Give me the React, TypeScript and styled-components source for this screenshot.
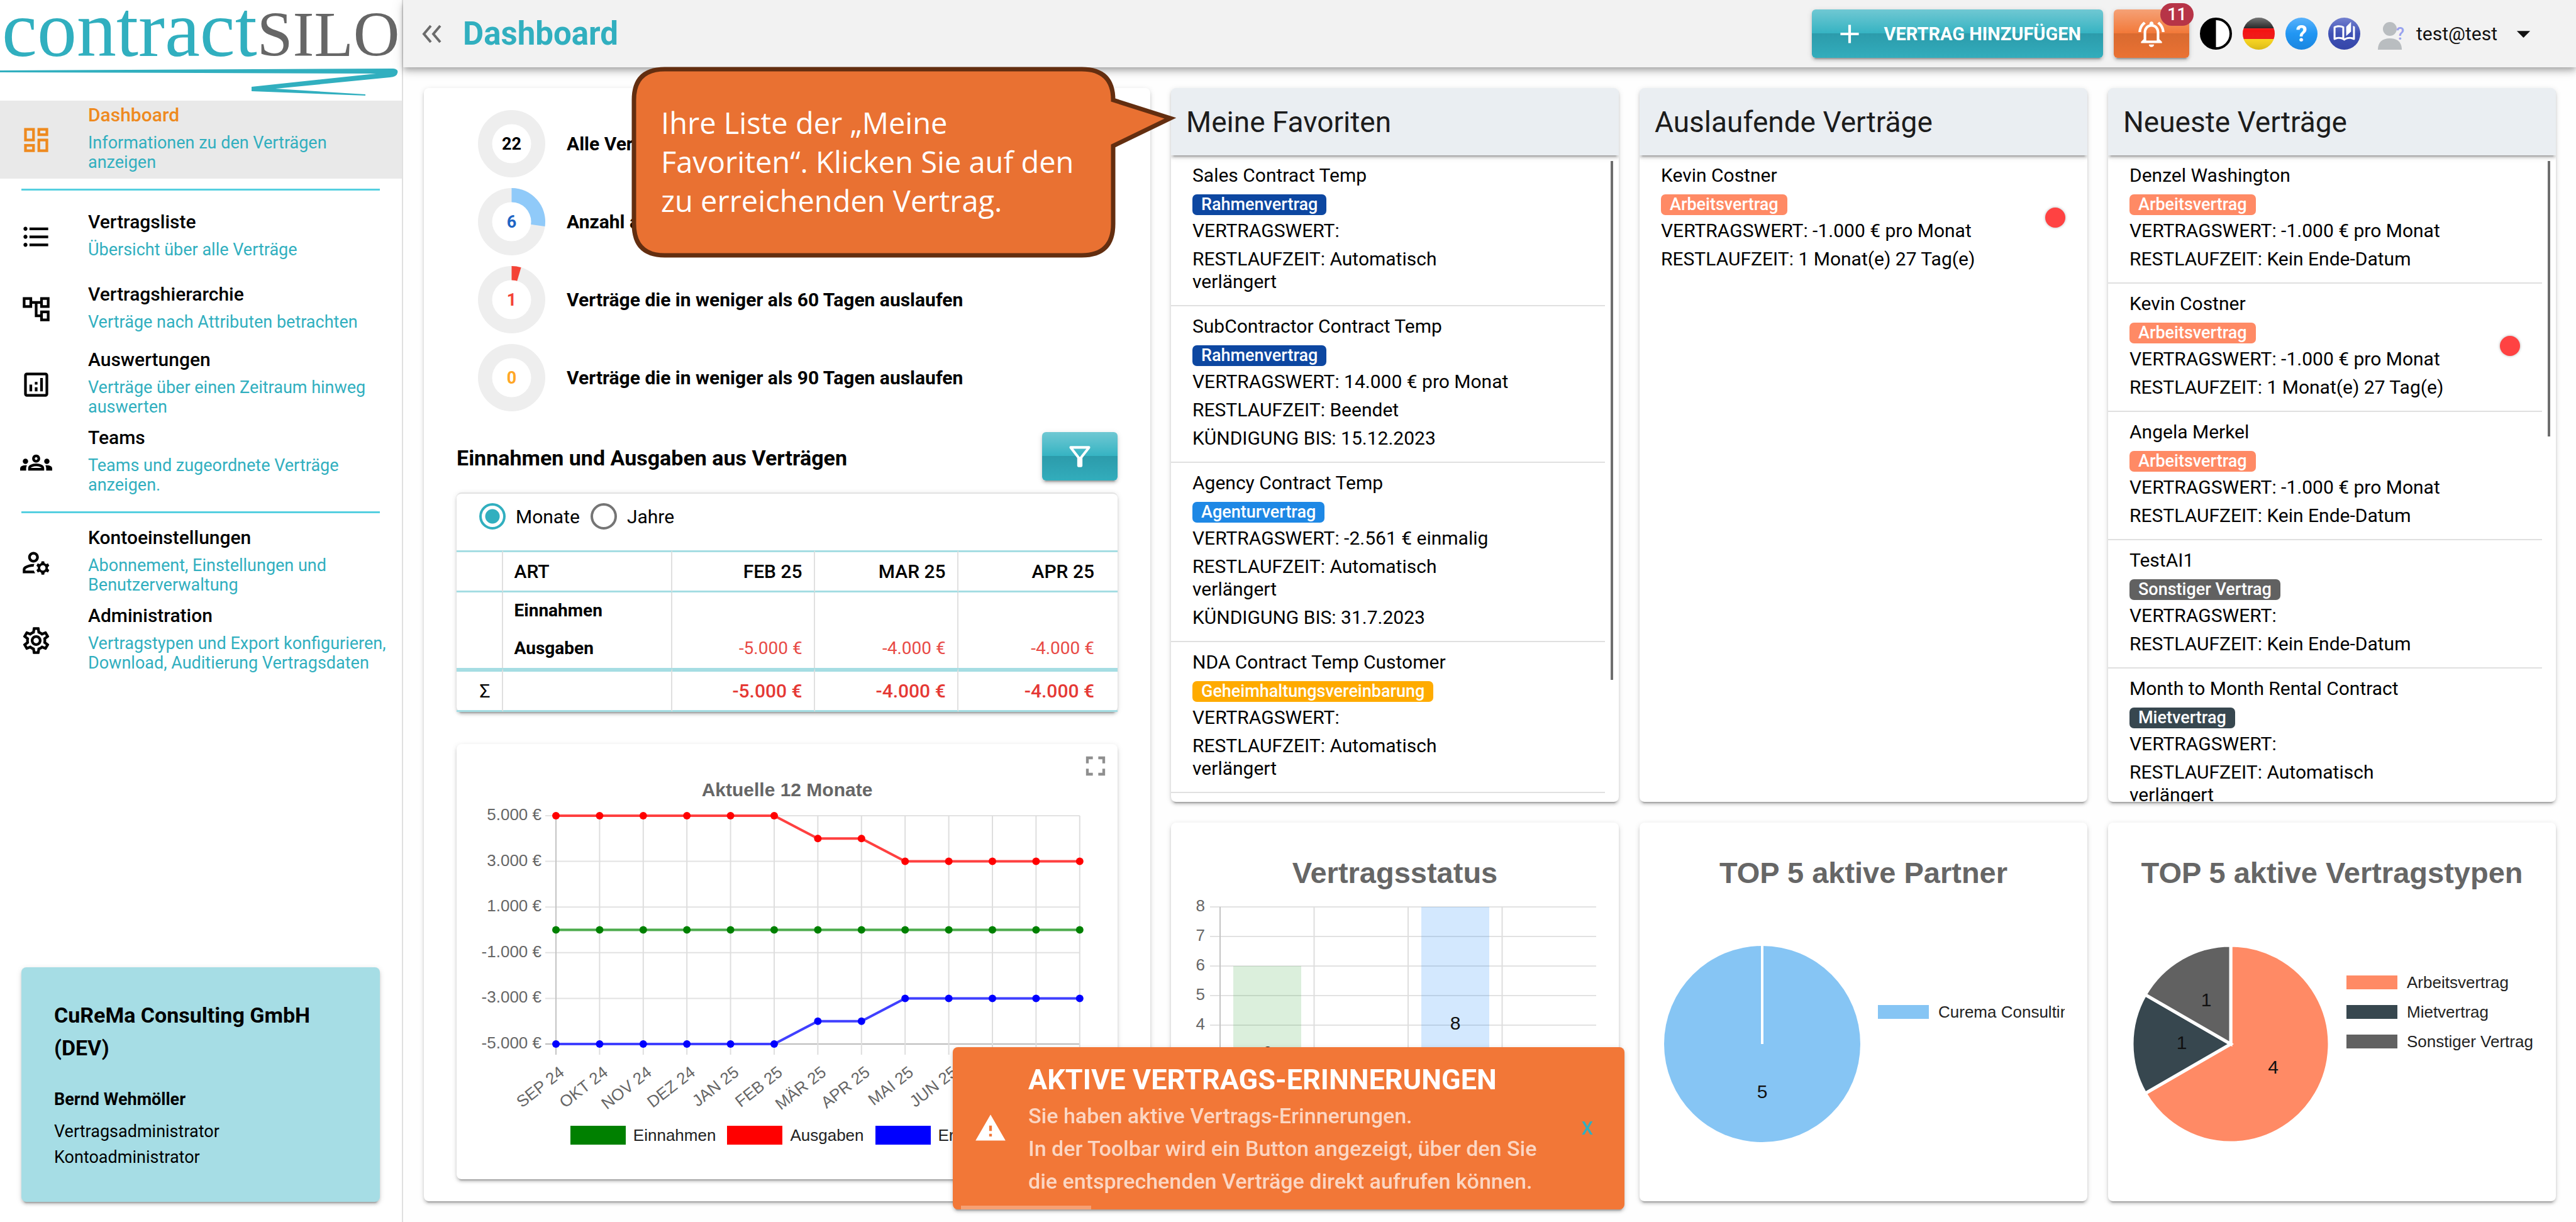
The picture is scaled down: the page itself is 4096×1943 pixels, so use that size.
import React, { useState } from "react";
import styled, { createGlobalStyle, css } from "styled-components";
import {
  MdAdd,
  MdArrowDropDown,
  MdFormatListBulleted,
  MdFullscreen,
  MdOutlineAccountTree,
  MdOutlineAnalytics,
  MdOutlineAutoStories,
  MdOutlineDashboard,
  MdOutlineFilterAlt,
  MdOutlineGroups,
  MdOutlineManageAccounts,
  MdOutlineNotificationsActive,
  MdOutlineSettings,
  MdWarning,
} from "react-icons/md";

const teal = "#31afbf";
const paleTeal = "#a5dde3";
const chartFont = `"Liberation Sans", Arial, sans-serif`;

const GlobalStyle = createGlobalStyle`
  *, *::before, *::after { box-sizing: border-box; }
  body {
    margin: 0;
    background: #fefefe;
    color: #000;
    font-family: Roboto, "Liberation Sans", sans-serif;
    font-size: 30px;
  }
  h1, h2, h3, p, ul { margin: 0; padding: 0; }
  ul { list-style: none; }
  a { color: inherit; text-decoration: none; }
  button { font-family: inherit; border: 0; background: none; padding: 0; cursor: pointer; }
`;

const raised = css`
  box-shadow: 0 6px 2px -4px rgba(0, 0, 0, 0.2), 0 4px 4px rgba(0, 0, 0, 0.14), 0 2px 10px rgba(0, 0, 0, 0.12);
`;

/* ---------- shell ---------- */

const Shell = styled.div`
  display: grid;
  grid-template-columns: 641px minmax(0, 1fr);
  grid-template-rows: minmax(0, 1fr);
  height: 100vh;
`;

const Sidebar = styled.aside`
  display: flex;
  flex-direction: column;
  background: #fff;
  border-right: 2px solid #e0e0e0;
  padding-bottom: 32px;
`;

const Logo = styled.a`
  display: block;
  height: 160px;
  svg { display: block; }
`;

const NavLink = styled.a<{ $active?: boolean; $short?: boolean }>`
  display: flex;
  align-items: center;
  min-height: ${(p) => (p.$short ? 115 : 124)}px;
  padding: 0 8px 0 32px;
  background: ${(p) => (p.$active ? "#e9e9e9" : "transparent")};
  color: ${(p) => (p.$active ? "#ee8a1f" : "#000")};
  svg { flex: none; width: 51px; height: 51px; margin-right: 57px; }
`;

const NavText = styled.span`
  display: flex;
  flex-direction: column;
  gap: 12px;
  padding-bottom: 4px;
`;

const NavTitle = styled.span`
  font-size: 30px;
  line-height: 34px;
  font-weight: 500;
`;

const NavHint = styled.span`
  font-size: 27px;
  line-height: 31px;
  color: ${teal};
`;

const NavRule = styled.hr`
  width: auto;
  height: 3px;
  margin: 16px 35px 16px 34px;
  border: 0;
  background: #55cfe0;
`;

const AccountCard = styled.section`
  ${raised}
  margin: auto 35px 0 34px;
  padding: 50px 52px 50px;
  border-radius: 8px;
  background: #a6dde5;
`;

const Company = styled.h2`
  font-size: 34px;
  line-height: 52px;
  font-weight: 700;
`;

const AccountName = styled.p`
  margin: 35px 0 10px;
  font-size: 27px;
  line-height: 42px;
  font-weight: 700;
`;

const AccountRole = styled.p`
  font-size: 27px;
  line-height: 41px;
`;

/* ---------- top bar ---------- */

const Page = styled.div`
  display: flex;
  flex-direction: column;
  min-width: 0;
`;

const TopBar = styled.header`
  display: flex;
  align-items: center;
  flex: none;
  height: 107px;
  padding: 0 68px 0 29px;
  background: #f2f2f2;
  box-shadow: 0 4px 8px -2px rgba(0, 0, 0, 0.2), 0 8px 10px rgba(0, 0, 0, 0.14), 0 2px 20px rgba(0, 0, 0, 0.12);
`;

const PageTitle = styled.h1`
  margin-left: 34px;
  font-size: 51px;
  line-height: 56px;
  font-weight: 700;
  color: ${teal};
`;

const Tools = styled.div`
  display: flex;
  align-items: center;
  gap: 17px;
  margin-left: auto;
`;

const GlossButton = styled.button<{ $tone: "teal" | "orange" }>`
  ${raised}
  position: relative;
  display: flex;
  align-items: center;
  justify-content: center;
  flex: none;
  gap: 30px;
  min-width: 120px;
  height: 77px;
  padding: 0 35px;
  border-radius: 6px;
  color: #fff;
  font-size: 29px;
  font-weight: 700;
  white-space: nowrap;
  background: ${(p) =>
    p.$tone === "teal"
      ? "linear-gradient(#70c8d3, #35b3c2 50%, #2c9bab 50%, #32adbc)"
      : "linear-gradient(#f5a176, #f27838 50%, #d96a30 50%, #ea7233)"};
  svg { width: 50px; height: 50px; }
`;

const Count = styled.span`
  position: absolute;
  top: -10px;
  right: -7px;
  width: 53px;
  height: 36px;
  border-radius: 18px;
  background: #b73447;
  font-size: 27px;
  line-height: 36px;
  font-weight: 500;
  text-align: center;
`;

const IconButton = styled.button`
  display: block;
  svg { display: block; }
`;

const UserButton = styled.button`
  display: flex;
  align-items: center;
  margin-left: 9px;
  font-size: 30px;
  color: #111;
  > svg:first-child { margin-right: 15px; }
  > svg:last-child { width: 51px; height: 51px; margin-left: 16px; margin-right: -10px; }
`;

/* ---------- cards ---------- */

const Board = styled.main`
  display: grid;
  flex: 1;
  min-height: 0;
  grid-template-columns: minmax(0, 1155fr) repeat(3, minmax(0, 712fr));
  grid-template-rows: minmax(0, 1135fr) minmax(0, 602fr);
  gap: 33px;
  padding: 33px 32px 33px 33px;
`;

const Card = styled.section`
  ${raised}
  display: flex;
  flex-direction: column;
  min-width: 0;
  border-radius: 8px;
  background: #fff;
  overflow: hidden;
`;

const Overview = styled(Card)`
  grid-row: span 2;
  padding: 35px 52px;
`;

const Stats = styled.ul`
  display: flex;
  flex-direction: column;
  gap: 17px;
  padding-left: 34px;
`;

const Stat = styled.li`
  display: flex;
  align-items: center;
  gap: 34px;
  font-size: 30px;
  font-weight: 700;
  white-space: nowrap;
  svg { display: block; }
`;

const SectionHead = styled.div`
  display: flex;
  align-items: center;
  justify-content: space-between;
  margin: 33px 0 19px;
  h2 { padding-top: 4px; font-size: 34px; line-height: 40px; font-weight: 700; }
`;

const Panel = styled.div`
  ${raised}
  border-radius: 8px;
  border-top: 2px solid #e2e2e2;
  background: #fff;
`;

const PeriodRow = styled.div`
  display: flex;
  align-items: center;
  gap: 17px;
  height: 90px;
  padding: 0 0 18px 36px;
`;

const RadioLabel = styled.label`
  display: flex;
  align-items: center;
  gap: 16px;
  font-size: 30px;
`;

const Radio = styled.input`
  appearance: none;
  width: 42px;
  height: 42px;
  margin: 0;
  border: 4px solid #757575;
  border-radius: 50%;
  &:checked {
    border-color: ${teal};
    background: radial-gradient(circle, ${teal} 11px, transparent 12px);
  }
`;

const Money = styled.table`
  width: 100%;
  border-collapse: separate;
  border-spacing: 0;
  table-layout: fixed;
  th, td {
    height: 60px;
    padding: 0 18px;
    border-right: 2px solid #e0e0e0;
    text-align: right;
    font-size: 28px;
    font-weight: 400;
  }
  th:last-child, td:last-child { border-right: 0; padding-right: 37px; }
  thead th {
    height: 67px;
    border-top: 3px solid ${paleTeal};
    border-bottom: 3px solid ${paleTeal};
    font-size: 30px;
    font-weight: 500;
  }
  th:nth-child(2) { text-align: left; }
  tbody th, tbody td { padding-bottom: 4px; }
  tbody th { font-weight: 700; }
  tbody td { color: #e84a46; }
  tfoot td, tfoot th {
    height: 70px;
    border-top: 6px solid ${paleTeal};
    border-bottom: 3px solid ${paleTeal};
    font-size: 30px;
  }
  tfoot td { font-weight: 500; color: #e53935; }
`;

const ChartPanel = styled.div`
  ${raised}
  position: relative;
  display: flex;
  flex-direction: column;
  flex: 1;
  margin-top: 51px;
  padding-top: 55px;
  border-radius: 8px;
  background: #fff;
  > svg { display: block; width: 100%; height: auto; }
`;

const ChartTitle = styled.h3`
  font-family: ${chartFont};
  font-size: 30px;
  line-height: 36px;
  color: #666;
  text-align: center;
`;

const ExpandButton = styled.button`
  position: absolute;
  top: 9px;
  right: 9px;
  color: #8f8f8f;
  svg { display: block; width: 52px; height: 52px; }
`;

const Legend = styled.ul<{ $column?: boolean }>`
  display: flex;
  flex-direction: ${(p) => (p.$column ? "column" : "row")};
  justify-content: center;
  gap: ${(p) => (p.$column ? 17 : 18)}px;
  font-family: ${chartFont};
  font-size: 26px;
  line-height: 30px;
  color: #222;
  white-space: nowrap;
`;

const LegendItem = styled.li<{ $color: string; $flat?: boolean }>`
  display: flex;
  align-items: center;
  gap: ${(p) => (p.$flat ? 15 : 12)}px;
  &::before {
    content: "";
    flex: none;
    width: ${(p) => (p.$flat ? 81 : 88)}px;
    height: ${(p) => (p.$flat ? 22 : 30)}px;
    background: ${(p) => p.$color};
  }
`;

const LineLegend = styled(Legend)`
  padding: 16px 2px 0 0;
`;

const AxisText = styled.text`
  font-family: ${chartFont};
  font-size: 26px;
  fill: #666;
`;

const ValueText = styled.text`
  font-family: ${chartFont};
  font-size: 30px;
  fill: #111;
  text-anchor: middle;
`;

/* ---------- contract lists ---------- */

const ListHead = styled.h2`
  ${raised}
  z-index: 1;
  flex: none;
  height: 107px;
  padding: 0 24px;
  background: #eaeef2;
  font-size: 46px;
  line-height: 108px;
  font-weight: 400;
  color: #1c1c1c;
`;

const ListBody = styled.div`
  display: flex;
  flex: 1;
  min-height: 0;
`;

const Items = styled.ul`
  flex: 1;
  min-width: 0;
  overflow: hidden;
`;

const Item = styled.li`
  display: flex;
  align-items: center;
  padding: 14px 0 19px 34px;
  border-bottom: 2px solid #e0e0e0;
  &:only-child { border-bottom: 0; }
`;

const ItemText = styled.div`
  display: flex;
  flex-direction: column;
  align-items: flex-start;
  flex: 1;
  gap: 9px;
  font-size: 30px;
  line-height: 36px;
`;

const Tag = styled.span<{ $color: string }>`
  margin: 3px 0 -2px;
  padding: 0 14px;
  border-radius: 7px;
  background: ${(p) => p.$color};
  color: #fff;
  font-size: 27px;
  line-height: 33px;
  font-weight: 500;
`;

const DotCell = styled.div`
  display: flex;
  justify-content: flex-end;
  flex: none;
  width: 136px;
  padding-right: 35px;
`;

const Dot = styled.span`
  width: 32px;
  height: 32px;
  border-radius: 50%;
  background: #ff4242;
  box-shadow: 0 0 4px rgba(0, 0, 0, 0.3);
`;

const Track = styled.div`
  flex: none;
  width: 22px;
  padding: 9px 9px 0;
`;

const Thumb = styled.div<{ $share: number }>`
  width: 4px;
  height: ${(p) => p.$share}%;
  background: #6e6e6e;
`;

/* ---------- small charts ---------- */

const SmallTitle = styled.h2`
  height: 102px;
  padding-top: 58px;
  font-family: ${chartFont};
  font-size: 47px;
  line-height: 44px;
  color: #666;
  text-align: center;
  white-space: nowrap;
`;

const BarCard = styled(Card)`
  > svg { display: block; width: 100%; height: auto; }
`;

const PieCard = styled(Card)`
  display: grid;
  grid-template-columns: 379px minmax(0, 1fr);
  grid-template-rows: 102px minmax(0, 1fr);
  ${SmallTitle} { grid-area: 1 / 1 / 2 / 3; }
  > svg { grid-area: 2 / 1; align-self: center; margin-left: 37px; }
  ${Legend} { grid-area: 1 / 2 / 3 / 3; align-self: center; overflow: hidden; margin-right: 36px; }
`;

/* ---------- overlays ---------- */

const Callout = styled.div`
  position: absolute;
  z-index: 3;
  top: 106px;
  left: 1004px;
  width: 866px;
  height: 304px;
  padding: 58px 90px 0 47px;
  color: #fff;
  font-family: "Open Sans", "Noto Sans", sans-serif;
  font-size: 47px;
  line-height: 62px;
  white-space: nowrap;
  svg { position: absolute; top: 0; left: 0; z-index: -1; }
`;

const Toast = styled.div`
  ${raised}
  position: fixed;
  z-index: 4;
  right: 1513px;
  bottom: 20px;
  display: flex;
  align-items: center;
  width: 1068px;
  height: 258px;
  padding: 0 50px 0 34px;
  border-radius: 8px;
  background: #f27737;
  color: #fff;
  overflow: hidden;
  > svg { flex: none; width: 52px; height: 52px; margin-right: 34px; }
`;

const ToastText = styled.div`
  flex: 1;
  padding: 2px 30px 0 0;
  h2 { font-size: 45px; line-height: 62px; font-weight: 700; }
  p { font-size: 34px; line-height: 52px; font-weight: 500; color: rgba(255, 255, 255, 0.7); }
`;

const ToastClose = styled.button`
  color: ${teal};
  font-size: 29px;
  font-weight: 500;
`;

const Progress = styled.div`
  position: absolute;
  left: 13px;
  bottom: 0;
  width: 207px;
  height: 6px;
  background: rgba(255, 255, 255, 0.3);
`;

/* ---------- data ---------- */

type NavEntry = { title: string; hint: string; icon: React.ReactNode; active?: boolean; short?: boolean };

const navGroups: NavEntry[][] = [
  [{ title: "Dashboard", hint: "Informationen zu den Verträgen anzeigen", icon: <MdOutlineDashboard />, active: true }],
  [
    { title: "Vertragsliste", hint: "Übersicht über alle Verträge", icon: <MdFormatListBulleted />, short: true },
    { title: "Vertragshierarchie", hint: "Verträge nach Attributen betrachten", icon: <MdOutlineAccountTree />, short: true },
    { title: "Auswertungen", hint: "Verträge über einen Zeitraum hinweg auswerten", icon: <MdOutlineAnalytics /> },
    { title: "Teams", hint: "Teams und zugeordnete Verträge anzeigen.", icon: <MdOutlineGroups /> },
  ],
  [
    { title: "Kontoeinstellungen", hint: "Abonnement, Einstellungen und Benutzerverwaltung", icon: <MdOutlineManageAccounts /> },
    { title: "Administration", hint: "Vertragstypen und Export konfigurieren, Download, Auditierung Vertragsdaten", icon: <MdOutlineSettings /> },
  ],
];

const stats = [
  { value: 22, part: 0, color: "#000", arc: "#eee", label: "Alle Verträge" },
  { value: 6, part: 6 / 22, color: "#1f65c4", arc: "#90caf9", label: "Anzahl aktive Verträge" },
  { value: 1, part: 1 / 22, color: "#f44336", arc: "#f44336", label: "Verträge die in weniger als 60 Tagen auslaufen" },
  { value: 0, part: 0, color: "#ffa726", arc: "#eee", label: "Verträge die in weniger als 90 Tagen auslaufen" },
];

type Contract = { name: string; tag: string; color: string; lines: string[]; alert?: boolean };

const work = { tag: "Arbeitsvertrag", color: "#ff8a65" };

const favourites: Contract[] = [
  { name: "Sales Contract Temp", tag: "Rahmenvertrag", color: "#0d47a1", lines: ["VERTRAGSWERT:", "RESTLAUFZEIT: Automatisch verlängert"] },
  { name: "SubContractor Contract Temp", tag: "Rahmenvertrag", color: "#0d47a1", lines: ["VERTRAGSWERT: 14.000 € pro Monat", "RESTLAUFZEIT: Beendet", "KÜNDIGUNG BIS: 15.12.2023"] },
  { name: "Agency Contract Temp", tag: "Agenturvertrag", color: "#1e88e5", lines: ["VERTRAGSWERT: -2.561 € einmalig", "RESTLAUFZEIT: Automatisch verlängert", "KÜNDIGUNG BIS: 31.7.2023"] },
  { name: "NDA Contract Temp Customer", tag: "Geheimhaltungsvereinbarung", color: "#ffab00", lines: ["VERTRAGSWERT:", "RESTLAUFZEIT: Automatisch verlängert"] },
];

const expiring: Contract[] = [
  { name: "Kevin Costner", ...work, alert: true, lines: ["VERTRAGSWERT: -1.000 € pro Monat", "RESTLAUFZEIT: 1 Monat(e) 27 Tag(e)"] },
];

const newest: Contract[] = [
  { name: "Denzel Washington", ...work, lines: ["VERTRAGSWERT: -1.000 € pro Monat", "RESTLAUFZEIT: Kein Ende-Datum"] },
  { name: "Kevin Costner", ...work, alert: true, lines: ["VERTRAGSWERT: -1.000 € pro Monat", "RESTLAUFZEIT: 1 Monat(e) 27 Tag(e)"] },
  { name: "Angela Merkel", ...work, lines: ["VERTRAGSWERT: -1.000 € pro Monat", "RESTLAUFZEIT: Kein Ende-Datum"] },
  { name: "TestAI1", tag: "Sonstiger Vertrag", color: "#616161", lines: ["VERTRAGSWERT:", "RESTLAUFZEIT: Kein Ende-Datum"] },
  { name: "Month to Month Rental Contract", tag: "Mietvertrag", color: "#37474f", lines: ["VERTRAGSWERT:", "RESTLAUFZEIT: Automatisch verlängert"] },
];

const months = ["SEP 24", "OKT 24", "NOV 24", "DEZ 24", "JAN 25", "FEB 25", "MÄR 25", "APR 25", "MAI 25", "JUN 25"];
const expenses = [5, 5, 5, 5, 5, 5, 4, 4, 3, 3, 3, 3, 3];
const series = [
  { color: "#008000", line: "#4dab4d", values: expenses.map(() => 0) },
  { color: "#ff0000", line: "#ff4040", values: expenses },
  { color: "#0000ff", line: "#4040ff", values: expenses.map((v) => -v) },
];

/* ---------- drawings ---------- */

const polar = (c: number, r: number, turn: number) => {
  const a = turn * Math.PI * 2;
  return `${c + r * Math.sin(a)} ${c - r * Math.cos(a)}`;
};

const wedge = (c: number, r: number, from: number, to: number) =>
  `M${c} ${c}L${polar(c, r, from)}A${r} ${r} 0 ${to - from > 0.5 ? 1 : 0} 1 ${polar(c, r, to)}Z`;

function LogoArt() {
  return (
    <svg width="639" height="160" viewBox="0 0 639 160" aria-hidden="true">
      <text x="3" y="89" fontFamily='"Liberation Serif", serif' fontSize="126" fill={teal}>
        contract
        <tspan fontSize="102" fill="#666">SILO</tspan>
      </text>
      <path
        fill={teal}
        d="M0 112L625 109Q634 110 632 116Q631 122 620 123L438 141L581 150L581 152L400 145L400 138L598 117L0 115Z"
      />
    </svg>
  );
}

function Donut({ value, part, color, arc }: { value: number; part: number; color: string; arc: string }) {
  return (
    <svg width="107" height="107" viewBox="0 0 107 107">
      <circle cx="53.5" cy="53.5" r="53.5" fill="#eee" />
      {part > 0 && <path d={wedge(53.5, 53.5, 0, part)} fill={arc} />}
      <circle cx="53.5" cy="53.5" r="31" fill="#fff" />
      <text x="53.5" y="63" textAnchor="middle" fontSize="27" fontWeight="700" fill={color}>
        {value}
      </text>
    </svg>
  );
}

function LineChart() {
  const x = (i: number) => 158 + i * 69.4;
  const y = (v: number) => 204.5 - v * 36.3;
  return (
    <svg viewBox="0 0 1051 500" role="img" aria-label="Aktuelle 12 Monate">
      {[5, 3, 1, -1, -3, -5].map((v) => (
        <g key={v}>
          <line x1="141" x2={x(12)} y1={y(v)} y2={y(v)} stroke={v === -5 ? "#bbb" : "#e2e2e2"} strokeWidth="2" />
          <AxisText x="135" y={y(v) + 7} textAnchor="end">{`${v}.000 €`}</AxisText>
        </g>
      ))}
      {expenses.map((_, i) => (
        <line key={i} x1={x(i)} x2={x(i)} y1={y(5)} y2={y(-5) + 17} stroke={i ? "#dedede" : "#c4c4c4"} strokeWidth="2" />
      ))}
      {months.map((m, i) => (
        <AxisText key={m} textAnchor="end" transform={`translate(${x(i) + 15} 434) rotate(-38)`}>
          {m}
        </AxisText>
      ))}
      {series.map((s) => (
        <g key={s.color}>
          <polyline points={s.values.map((v, i) => `${x(i)},${y(v)}`).join(" ")} fill="none" stroke={s.line} strokeWidth="4" />
          {s.values.map((v, i) => (
            <circle key={i} cx={x(i)} cy={y(v)} r="6" fill={s.color} />
          ))}
        </g>
      ))}
    </svg>
  );
}

function BarChart() {
  const y = (v: number) => 408 - v * 47;
  return (
    <svg viewBox="0 0 712 480" role="img" aria-label="Vertragsstatus">
      {[3, 4, 5, 6, 7, 8].map((v) => (
        <g key={v}>
          <line x1="62" x2="676" y1={y(v)} y2={y(v)} stroke="#e2e2e2" strokeWidth="2" />
          <AxisText x="54" y={y(v) + 7} textAnchor="end">{v}</AxisText>
        </g>
      ))}
      {[0, 1, 2, 3].map((i) => (
        <line key={i} x1={78 + i * 149.5} x2={78 + i * 149.5} y1={y(8)} y2={y(0) + 17} stroke={i ? "#dedede" : "#c4c4c4"} strokeWidth="2" />
      ))}
      <rect x="99" y={y(6)} width="108" height={282} fill="rgba(76,175,80,0.2)" />
      <rect x="398" y={y(8)} width="108" height={376} fill="rgba(33,140,250,0.2)" />
      <ValueText x="153" y={y(3) + 7}>6</ValueText>
      <ValueText x="452" y={y(4) + 7}>8</ValueText>
    </svg>
  );
}

function Pie({ parts }: { parts: { value: number; color: string }[] }) {
  const total = parts.reduce((n, p) => n + p.value, 0);
  let turn = 0;
  return (
    <svg width="316" height="316" viewBox="0 0 316 316" role="img" aria-label="Kreisdiagramm">
      {parts.map((p) => {
        const from = turn;
        turn += p.value / total;
        const mid = (from + turn) / 2;
        const [lx, ly] = polar(158, 78, mid).split(" ").map(Number);
        return (
          <g key={p.color}>
            {parts.length === 1 ? (
              <>
                <circle cx="158" cy="158" r="156" fill={p.color} />
                <line x1="158" y1="0" x2="158" y2="158" stroke="#fff" strokeWidth="4" />
              </>
            ) : (
              <path d={wedge(158, 157, from, turn)} fill={p.color} stroke="#fff" strokeWidth="5" />
            )}
            <ValueText x={lx} y={ly + 8}>{p.value}</ValueText>
          </g>
        );
      })}
    </svg>
  );
}

function ContrastIcon() {
  return (
    <svg width="51" height="51" viewBox="0 0 51 51">
      <circle cx="25.5" cy="25.5" r="23.5" fill="#fff" stroke="#000" strokeWidth="4" />
      <path d="M25.5 2a23.5 23.5 0 0 0 0 47z" />
    </svg>
  );
}

function FlagIcon() {
  return (
    <svg width="51" height="51" viewBox="0 0 51 51">
      <defs>
        <clipPath id="flag-round"><circle cx="25.5" cy="25.5" r="25.5" /></clipPath>
        <linearGradient id="flag-shine" x1="0" y1="0" x2="0" y2="1">
          <stop offset="0" stopColor="#fff" stopOpacity=".4" />
          <stop offset=".4" stopColor="#fff" stopOpacity="0" />
          <stop offset="1" stopColor="#000" stopOpacity=".15" />
        </linearGradient>
      </defs>
      <g clipPath="url(#flag-round)">
        <path fill="#1a1a1a" d="M0 0h51v17H0z" />
        <path fill="#f31212" d="M0 17h51v17H0z" />
        <path fill="#ffd91a" d="M0 34h51v17H0z" />
        <path fill="url(#flag-shine)" d="M0 0h51v51H0z" />
      </g>
    </svg>
  );
}

function HelpIcon() {
  return (
    <svg width="51" height="51" viewBox="0 0 51 51">
      <linearGradient id="help-fill" x1="0" y1="0" x2="0" y2="1">
        <stop offset="0" stopColor="#59b2fb" />
        <stop offset=".5" stopColor="#2196f3" />
        <stop offset="1" stopColor="#1b86e0" />
      </linearGradient>
      <circle cx="25.5" cy="25.5" r="25.5" fill="url(#help-fill)" />
      <text x="25.5" y="38" textAnchor="middle" fontSize="36" fontWeight="700" fill="#fff">?</text>
    </svg>
  );
}

function GuideIcon() {
  return (
    <svg width="51" height="51" viewBox="0 0 51 51" color="#fff">
      <linearGradient id="guide-fill" x1="0" y1="0" x2="0" y2="1">
        <stop offset="0" stopColor="#7481cf" />
        <stop offset=".5" stopColor="#3f51b5" />
        <stop offset="1" stopColor="#3546a8" />
      </linearGradient>
      <circle cx="25.5" cy="25.5" r="25.5" fill="url(#guide-fill)" />
      <MdOutlineAutoStories x="7" y="6" size="37" />
    </svg>
  );
}

function UserIcon() {
  return (
    <svg width="48" height="51" viewBox="0 0 48 51">
      <circle cx="21" cy="18" r="11" fill="#b9bdc0" />
      <path fill="#b9bdc0" d="M2 51c0-12 7-18 19-18s19 6 19 18z" />
      <text x="31" y="35" fontSize="27" fontWeight="500" fill="#9aa2ee">?</text>
    </svg>
  );
}

function CollapseIcon() {
  return (
    <svg width="32" height="30" viewBox="0 0 32 30" fill="none" stroke="#6b6b6b" strokeWidth="4">
      <path d="M15 2L4 15l11 13M30 2L19 15l11 13" />
    </svg>
  );
}

/* ---------- sections ---------- */

function ContractList({ title, items, thumb }: { title: string; items: Contract[]; thumb?: number }) {
  return (
    <Card>
      <ListHead>{title}</ListHead>
      <ListBody>
        <Items>
          {items.map((c) => (
            <Item key={c.name}>
              <ItemText>
                <a href="#vertrag">{c.name}</a>
                <Tag $color={c.color}>{c.tag}</Tag>
                {c.lines.map((l) => (
                  <p key={l}>{l}</p>
                ))}
              </ItemText>
              <DotCell>{c.alert && <Dot />}</DotCell>
            </Item>
          ))}
        </Items>
        {thumb !== undefined && (
          <Track>
            <Thumb $share={thumb} />
          </Track>
        )}
      </ListBody>
    </Card>
  );
}

function MoneyTable() {
  return (
    <Money>
      <colgroup>
        <col style={{ width: "7%" }} />
        <col style={{ width: "25.6%" }} />
        <col style={{ width: "21.6%" }} />
        <col style={{ width: "21.7%" }} />
        <col />
      </colgroup>
      <thead>
        <tr>
          <th aria-label="Summe" />
          <th>ART</th>
          <th>FEB 25</th>
          <th>MAR 25</th>
          <th>APR 25</th>
        </tr>
      </thead>
      <tbody>
        <tr>
          <td />
          <th>Einnahmen</th>
          <td />
          <td />
          <td />
        </tr>
        <tr>
          <td />
          <th>Ausgaben</th>
          <td>-5.000 €</td>
          <td>-4.000 €</td>
          <td>-4.000 €</td>
        </tr>
      </tbody>
      <tfoot>
        <tr>
          <th>Σ</th>
          <td />
          <td>-5.000 €</td>
          <td>-4.000 €</td>
          <td>-4.000 €</td>
        </tr>
      </tfoot>
    </Money>
  );
}

export default function App() {
  const [period, setPeriod] = useState("Monate");
  return (
    <>
      <GlobalStyle />
      <Shell>
        <Sidebar>
          <Logo href="#start" aria-label="contractSILO">
            <LogoArt />
          </Logo>
          <nav>
            {navGroups.map((group, g) => (
              <React.Fragment key={g}>
                {g > 0 && <NavRule />}
                {group.map((n) => (
                  <NavLink key={n.title} href="#nav" $active={n.active} $short={n.short}>
                    {n.icon}
                    <NavText>
                      <NavTitle>{n.title}</NavTitle>
                      <NavHint>{n.hint}</NavHint>
                    </NavText>
                  </NavLink>
                ))}
              </React.Fragment>
            ))}
          </nav>
          <AccountCard>
            <Company>CuReMa Consulting GmbH (DEV)</Company>
            <AccountName>Bernd Wehmöller</AccountName>
            <AccountRole>Vertragsadministrator</AccountRole>
            <AccountRole>Kontoadministrator</AccountRole>
          </AccountCard>
        </Sidebar>

        <Page>
          <TopBar>
            <IconButton aria-label="Menü einklappen">
              <CollapseIcon />
            </IconButton>
            <PageTitle>Dashboard</PageTitle>
            <Tools>
              <GlossButton $tone="teal">
                <MdAdd />
                VERTRAG HINZUFÜGEN
              </GlossButton>
              <GlossButton $tone="orange" aria-label="Erinnerungen">
                <MdOutlineNotificationsActive />
                <Count>11</Count>
              </GlossButton>
              <IconButton aria-label="Kontrast"><ContrastIcon /></IconButton>
              <IconButton aria-label="Sprache"><FlagIcon /></IconButton>
              <IconButton aria-label="Hilfe"><HelpIcon /></IconButton>
              <IconButton aria-label="Handbuch"><GuideIcon /></IconButton>
              <UserButton>
                <UserIcon />
                test@test
                <MdArrowDropDown />
              </UserButton>
            </Tools>
          </TopBar>

          <Board>
            <Overview>
              <Stats>
                {stats.map((s) => (
                  <Stat key={s.label}>
                    <Donut value={s.value} part={s.part} color={s.color} arc={s.arc} />
                    {s.label}
                  </Stat>
                ))}
              </Stats>
              <SectionHead>
                <h2>Einnahmen und Ausgaben aus Verträgen</h2>
                <GlossButton $tone="teal" aria-label="Filter">
                  <MdOutlineFilterAlt />
                </GlossButton>
              </SectionHead>
              <Panel>
                <PeriodRow>
                  {["Monate", "Jahre"].map((p) => (
                    <RadioLabel key={p}>
                      <Radio type="radio" name="period" checked={period === p} onChange={() => setPeriod(p)} />
                      {p}
                    </RadioLabel>
                  ))}
                </PeriodRow>
                <MoneyTable />
              </Panel>
              <ChartPanel>
                <ChartTitle>Aktuelle 12 Monate</ChartTitle>
                <ExpandButton aria-label="Vollbild">
                  <MdFullscreen />
                </ExpandButton>
                <LineChart />
                <LineLegend>
                  <LegendItem $color="#008000">Einnahmen</LegendItem>
                  <LegendItem $color="#ff0000">Ausgaben</LegendItem>
                  <LegendItem $color="#0000ff">Ergebnis</LegendItem>
                </LineLegend>
              </ChartPanel>
            </Overview>

            <ContractList title="Meine Favoriten" items={favourites} thumb={81} />
            <ContractList title="Auslaufende Verträge" items={expiring} />
            <ContractList title="Neueste Verträge" items={newest} thumb={43} />

            <BarCard>
              <SmallTitle>Vertragsstatus</SmallTitle>
              <BarChart />
            </BarCard>
            <PieCard>
              <SmallTitle>TOP 5 aktive Partner</SmallTitle>
              <Pie parts={[{ value: 5, color: "#86c5f4" }]} />
              <Legend $column>
                <LegendItem $flat $color="#86c5f4">Curema Consulting GmbH</LegendItem>
              </Legend>
            </PieCard>
            <PieCard>
              <SmallTitle>TOP 5 aktive Vertragstypen</SmallTitle>
              <Pie
                parts={[
                  { value: 4, color: "#ff8a65" },
                  { value: 1, color: "#37474f" },
                  { value: 1, color: "#616161" },
                ]}
              />
              <Legend $column>
                <LegendItem $flat $color="#ff8a65">Arbeitsvertrag</LegendItem>
                <LegendItem $flat $color="#37474f">Mietvertrag</LegendItem>
                <LegendItem $flat $color="#616161">Sonstiger Vertrag</LegendItem>
              </Legend>
            </PieCard>
          </Board>
        </Page>
      </Shell>

      <Callout role="note">
        <svg width="866" height="304" viewBox="0 0 866 304">
          <path
            d="M53 4H716Q766 4 766 53L857 82L766 126V250Q766 300 716 300H53Q4 300 4 250V53Q4 4 53 4Z"
            fill="#e97132"
            stroke="#632e10"
            strokeWidth="7"
          />
        </svg>
        Ihre Liste der „Meine
        <br />
        Favoriten“. Klicken Sie auf den
        <br />
        zu erreichenden Vertrag.
      </Callout>

      <Toast role="alert">
        <MdWarning />
        <ToastText>
          <h2>AKTIVE VERTRAGS-ERINNERUNGEN</h2>
          <p>Sie haben aktive Vertrags-Erinnerungen.</p>
          <p>In der Toolbar wird ein Button angezeigt, über den Sie die entsprechenden Verträge direkt aufrufen können.</p>
        </ToastText>
        <ToastClose aria-label="Schließen">X</ToastClose>
        <Progress />
      </Toast>
    </>
  );
}
